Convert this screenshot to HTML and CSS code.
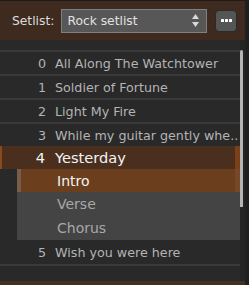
FILE: index.html
```html
<!DOCTYPE html>
<html lang="en">
<head>
<meta charset="UTF-8">
<meta name="viewport" content="width=device-width, initial-scale=1.0">
<title>Setlist</title>
<link rel="stylesheet" href="styles.css">
</head>
<body>
    <div class="app">
        <div class="header">
            <span class="label">Setlist:</span>
            <div class="select">
                <span>Rock setlist</span>
                <svg class="arrows" width="7" height="13" viewBox="0 0 7 13">
                    <path d="M3.5 0 L7 5 L0 5 Z M3.5 13 L7 8 L0 8 Z" fill="#d8d8d8"/>
                </svg>
            </div>
            <button class="more"><i></i><i></i><i></i></button>
        </div>

        <div class="main">
            <div class="list">
                <div class="row"><span class="num">0</span><span class="title">All Along The Watchtower</span></div>
                <div class="row"><span class="num">1</span><span class="title">Soldier of Fortune</span></div>
                <div class="row"><span class="num">2</span><span class="title">Light My Fire</span></div>
                <div class="row"><span class="num">3</span><span class="title">While my guitar gently whe..</span></div>
                <div class="row current"><span class="num">4</span><span class="title">Yesterday</span></div>
                <div class="parts">
                    <div class="part active">Intro</div>
                    <div class="part">Verse</div>
                    <div class="part">Chorus</div>
                </div>
                <div class="row last"><span class="num">5</span><span class="title">Wish you were here</span></div>
            </div>
            <div class="scroll"><div class="thumb"></div></div>
        </div>
        <div class="footer"></div>
    </div>
</body>
</html>
```

FILE: styles.css
```css
body {
    margin: 0;
    padding: 0;
    background-color: #1f1f1f;
    font-family: "DejaVu Sans", Verdana, sans-serif;
    overflow: hidden;
}

.app {
    width: 245px;
    height: 285px;
    display: flex;
    flex-direction: column;
    background-color: #292929;
}

.header {
    height: 39px;
    border-top: 1px solid #1e1a17;
    background-color: #3e2a1e;
    display: flex;
    align-items: center;
    padding-left: 12px;
}

.label {
    color: #dcdcdc;
    font-size: 12.3px;
    margin-right: 7px;
}

.select {
    width: 146px;
    height: 24px;
    box-sizing: border-box;
    border: 1px solid #808080;
    background-color: #575757;
    display: flex;
    align-items: center;
    justify-content: space-between;
    padding: 0 7px 0 5px;
    color: #e0e0e0;
    font-size: 12.3px;
}

.more {
    margin-left: 8px;
    width: 22px;
    height: 22px;
    border: 1px solid #2a2a2a;
    border-radius: 4px;
    background-color: #555555;
    display: flex;
    align-items: center;
    justify-content: center;
    gap: 1px;
    padding: 0;
}

.more i {
    width: 3px;
    height: 3px;
    border-radius: 0.5px;
    background-color: #ffffff;
}

.main {
    height: 241px;
    display: flex;
}

.list {
    width: 240px;
    padding-top: 10px;
    overflow: hidden;
}

.row {
    height: 22px;
    border-top: 2px solid #3a3a3a;
    display: flex;
    align-items: center;
    color: #b4b4b4;
    font-size: 12.7px;
    white-space: nowrap;
}

.num {
    width: 46px;
    text-align: right;
    margin-right: 9px;
}

.row.current {
    height: 23px;
    border-top: 0;
    background-color: #4a2f1f;
    border-left: 2px solid #8c4a1a;
    border-right: 5px solid #7a4118;
    color: #f4f4f4;
    font-size: 14.6px;
}

.row.current .num {
    width: 43px;
    margin-right: 10px;
}

.row.last {
    height: 24px;
    border-top: 0;
    border-bottom: 2px solid #3a3a3a;
}

.parts {
    margin-left: 17px;
    background-color: #444444;
}

.part {
    height: 24px;
    display: flex;
    align-items: center;
    padding-left: 40px;
    color: #a8a8a8;
    font-size: 14px;
}

.part.active {
    height: 23px;
    background-color: #6b3f1e;
    border-left: 4px solid #7b5c4c;
    border-right: 5px solid #76482a;
    padding-left: 36px;
    color: #f4f4f4;
}

.scroll {
    width: 5px;
    padding-top: 10px;
    background-color: #242424;
}

.thumb {
    width: 3px;
    height: 157px;
    border-radius: 2px 2px 0 0;
    background-color: #b4b4b4;
}

.footer {
    margin-top: auto;
    height: 4px;
    background-color: #45301f;
}
```
